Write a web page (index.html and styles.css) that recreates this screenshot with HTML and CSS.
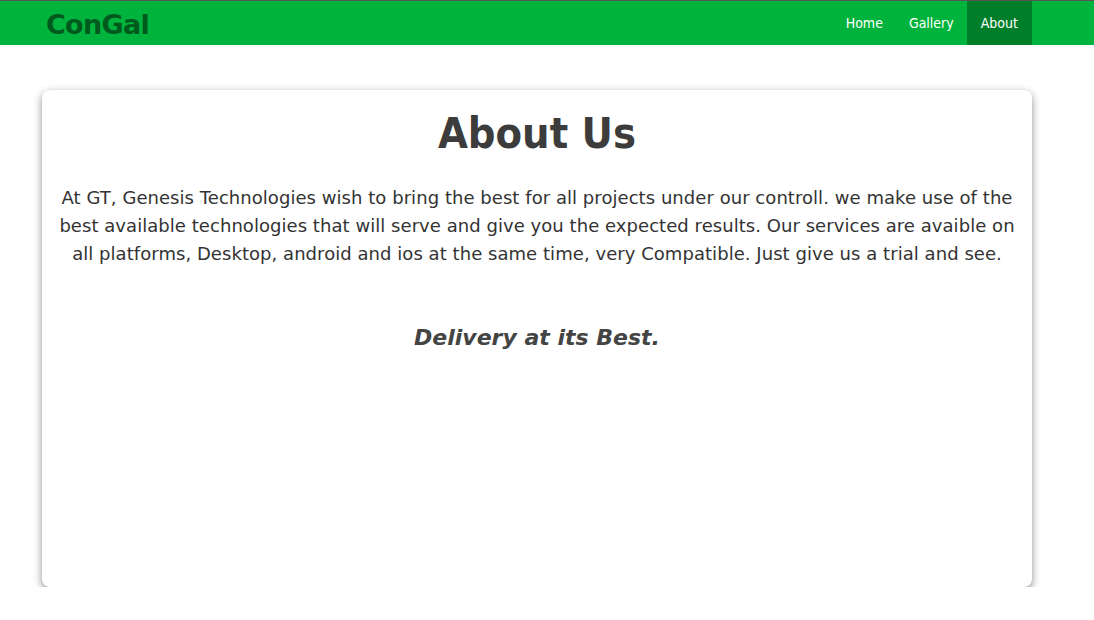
FILE: index.html
```html
<!DOCTYPE html>
<html>
<head>
<meta charset="utf-8">
<link rel="stylesheet" href="styles.css">
</head>
<body>
<nav class="navbar">
  <div class="brand">ConGal</div>
  <ul class="links">
    <li><a href="#">Home</a></li>
    <li><a href="#">Gallery</a></li>
    <li><a href="#" class="active">About</a></li>
  </ul>
</nav>
<main class="wrap">
  <section class="card">
    <h1>About Us</h1>
    <p>At GT, Genesis Technologies wish to bring the best for all projects under our controll. we make use of the best available technologies that will serve and give you the expected results. Our services are avaible on all platforms, Desktop, android and ios at the same time, very Compatible. Just give us a trial and see.</p>
    <h3>Delivery at its Best.</h3>
  </section>
</main>
</body>
</html>
```
FILE: styles.css
```css
html, body {
  margin: 0;
  padding: 0;
  background: #fff;
  font-family: "DejaVu Sans", Verdana, sans-serif;
}
.navbar {
  display: flex;
  align-items: stretch;
  justify-content: space-between;
  height: 44px;
  border-top: 1px solid #555;
  background: #00b33c;
  padding: 0 62px 0 46px;
}
.brand {
  display: flex;
  align-items: center;
  font-size: 27px;
  font-weight: bold;
  color: #005a1e;
  letter-spacing: -0.7px;
  padding-top: 2px;
}
.links {
  display: flex;
  list-style: none;
  margin: 0;
  padding: 0;
}
.links a {
  display: flex;
  align-items: center;
  height: 100%;
  padding: 0 13px;
  color: #fff;
  text-decoration: none;
  font-family: "DejaVu Sans Condensed", "DejaVu Sans", sans-serif;
  font-size: 14px;
}
.links a.active {
  background: #007e2a;
  padding: 0 14px;
}
.wrap {
  padding: 45px 62px 0 42px;
}
.card {
  height: 497px;
  box-sizing: border-box;
  border-radius: 8px;
  box-shadow: 0 3px 8px rgba(0,0,0,0.45);
  padding: 10px 14px;
  text-align: center;
  color: #3c3c3c;
}
.card h1 {
  margin: 0;
  font-family: "DejaVu Sans Condensed", "DejaVu Sans", sans-serif;
  font-size: 43px;
  line-height: 66px;
  color: #3c3c3c;
}
.card p {
  margin: 18px 0 0;
  font-size: 18px;
  letter-spacing: 0.05px;
  line-height: 28px;
  color: #333;
}
.card h3 {
  margin: 57px 0 0;
  font-size: 22px;
  font-style: italic;
  font-weight: bold;
  color: #444;
}
```
